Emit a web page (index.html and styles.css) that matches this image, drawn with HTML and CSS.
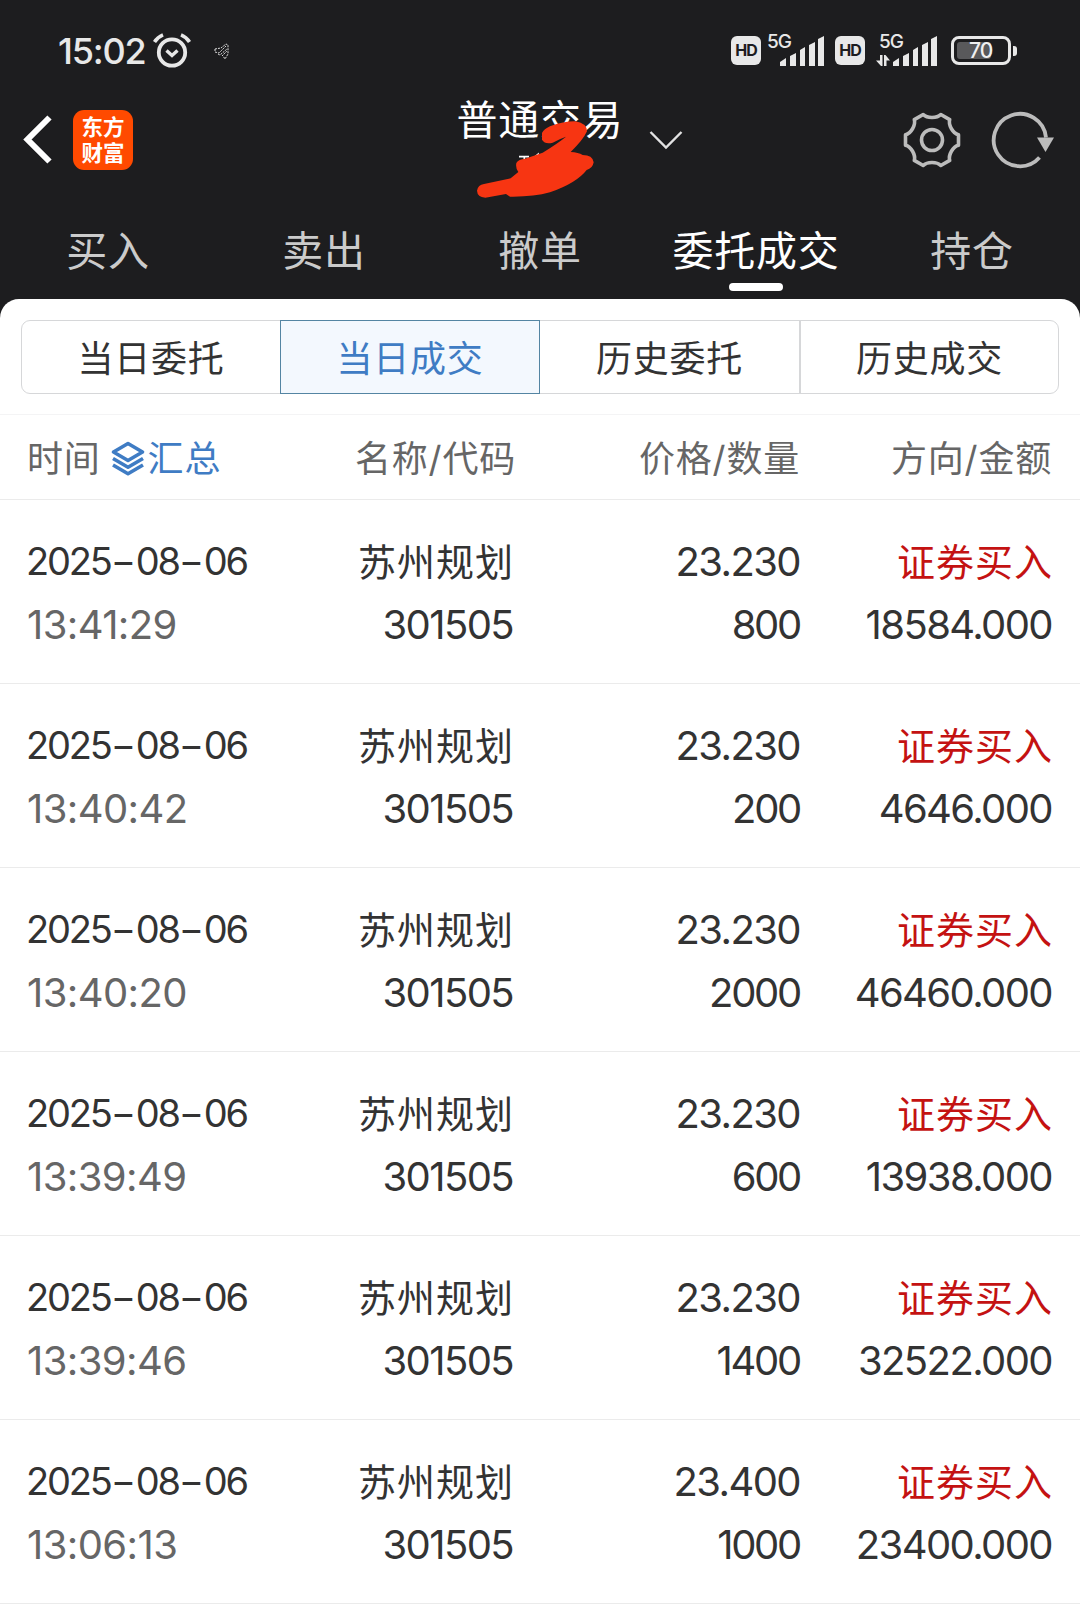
FILE: index.html
```html
<!DOCTYPE html>
<html lang="zh-CN">
<head>
<meta charset="utf-8">
<title>普通交易</title>
<link rel="stylesheet" href="styles.css">
</head>
<body>
<header class="top">
  <div class="status">
    <div class="status-left">
      <span class="clock">15:02</span>
      <svg class="alarm" width="38" height="36" viewBox="0 0 38 36" fill="none" stroke="#e8e8e8"><circle cx="19" cy="19.500" r="13.200" stroke-width="3.800"/><path d="M13.500 17.500l5.500 5 5.500-5" stroke-width="3.400"/><path d="M1.500 9Q4.500 4 10 1.800M36.500 9Q33.500 4 28 1.800" stroke-width="3.600"/></svg>
      <svg class="bell" width="16" height="18" viewBox="0 0 16 18" fill="none" stroke="#ddd" stroke-width="1" stroke-dasharray="2 1"><path d="M1 6l6-1 5-4 2 1v9l-3 5-2-3M1 6v3l4 1 7-7M4 11l2 1 7-6M8 13l5-5"/></svg>
    </div>
    <div class="status-right">
      <span class="hd">HD</span>
      <div class="signal"><span class="net">5G</span><svg width="60" height="34" viewBox="0 0 60 34" fill="#e8e8e8"><path d="M14 33v-4l6-4v8zM24 33v-10l6-3v13zM34 33v-16l5-3v19zM43 33v-21l6-3v24zM52 33v-27l6-3v30z"/></svg></div>
      <span class="hd second">HD</span>
      <div class="signal dual"><span class="net">5G</span><svg width="64" height="34" viewBox="0 0 64 34" fill="#e8e8e8"><path d="M5 22h2.500v11H6L1 27.500h4zM9 33V22h1.500l4.500 5.500h-3.500V33zM18 33v-4l6-4v8zM28 33v-10l6-3v13zM38 33v-16l5-3v19zM47 33v-21l6-3v24zM56 33v-27l6-3v30z"/></svg></div>
      <div class="battery"><span class="level">70</span></div>
      <i class="nub"></i>
    </div>
  </div>
  <div class="bar">
    <div class="bar-left">
      <svg width="30" height="50" viewBox="0 0 30 50" fill="none" stroke="#fff" stroke-width="6"><path d="M26.500 3.500L4.500 25.500 26.500 47.500"/></svg>
      <div class="logo">东方<br>财富</div>
    </div>
    <div class="title">
      <h1>普通交易</h1>
      <svg class="scribble" width="120" height="80" viewBox="168 118 360 240"><path d="M297 231h30M313 231v10M340 236l14-12v16" fill="none" stroke="#fff" stroke-width="5"/><path fill="#f73512" d="M366 160Q372 148 390 140Q430 125 465 125Q500 130 501 155Q490 180 452 217Q475 218 488 226Q518 226 521 248Q518 266 500 271Q470 310 390 338Q340 352 270 351L258 343L196 354Q172 352 171 333Q174 315 192 313L272 296L295 277Q286 265 289 250Q296 238 315 237L368 219Q415 190 438 171Q420 177 398 189Q375 195 366 180Z"/></svg>
      <svg class="chev" width="34" height="20" viewBox="0 0 34 20" fill="none" stroke="#e2e2e2" stroke-width="2.400"><path d="M1.500 2L17 17.500 32.500 2"/></svg>
    </div>
    <div class="bar-right">
      <svg width="60" height="60" viewBox="-30 -30 60 60" fill="none" stroke="#bcbcbc" stroke-width="3.600" stroke-linejoin="round"><circle r="10.500"/><path d="M26.500 5.200C21 6.500 16.100 14.900 17.700 20.400L8.800 25.500C4.900 21.500-4.900 21.500-8.800 25.500L-17.700 20.400C-16.100 14.900-21 6.500-26.500 5.200V-5.200C-21-6.500-16.100-14.900-17.700-20.400L-8.800-25.500C-4.900-21.500 4.900-21.500 8.800-25.500L17.700-20.400C16.100-14.900 21-6.500 26.500-5.200Z"/></svg>
      <svg width="64" height="60" viewBox="-30 -30 64 60"><path d="M19.500 17.500A26.200 26.200 0 1 1 26-2.500" fill="none" stroke="#bcbcbc" stroke-width="3.800"/><path d="M17 -2.500H34L25.500 12Z" fill="#bcbcbc"/></svg>
    </div>
  </div>
  <nav class="tabs">
    <span>买入</span><span>卖出</span><span>撤单</span><span class="on">委托成交</span><span>持仓</span>
  </nav>
</header>
<main class="sheet">
  <div class="segments">
    <span>当日委托</span><span class="on">当日成交</span><span>历史委托</span><span>历史成交</span>
  </div>
  <div class="head grid">
    <div class="when">时间<svg width="34" height="36" viewBox="0 0 34 36" fill="none" stroke="#3f7cc4" stroke-width="3.600" stroke-linejoin="round"><path d="M17 2.500L31.500 11 17 19.500 2.500 11Z"/><path d="M2 17.500L17 26.200 32 17.500M2 24L17 32.700 32 24"/></svg><b>汇总</b></div>
    <div>名称/代码</div><div>价格/数量</div><div>方向/金额</div>
  </div>
  <div class="row grid">
    <div><p class="date">2025<i>-</i>08<i>-</i>06</p><p class="time">13:41:29</p></div>
    <div class="stock"><p class="cn">苏州规划</p><p>301505</p></div>
    <div><p>23.230</p><p class="qty">800</p></div>
    <div><p class="cn buy">证券买入</p><p>18584.000</p></div>
  </div>
  <div class="row grid">
    <div><p class="date">2025<i>-</i>08<i>-</i>06</p><p class="time">13:40:42</p></div>
    <div class="stock"><p class="cn">苏州规划</p><p>301505</p></div>
    <div><p>23.230</p><p class="qty">200</p></div>
    <div><p class="cn buy">证券买入</p><p>4646.000</p></div>
  </div>
  <div class="row grid">
    <div><p class="date">2025<i>-</i>08<i>-</i>06</p><p class="time">13:40:20</p></div>
    <div class="stock"><p class="cn">苏州规划</p><p>301505</p></div>
    <div><p>23.230</p><p class="qty">2000</p></div>
    <div><p class="cn buy">证券买入</p><p>46460.000</p></div>
  </div>
  <div class="row grid">
    <div><p class="date">2025<i>-</i>08<i>-</i>06</p><p class="time">13:39:49</p></div>
    <div class="stock"><p class="cn">苏州规划</p><p>301505</p></div>
    <div><p>23.230</p><p class="qty">600</p></div>
    <div><p class="cn buy">证券买入</p><p>13938.000</p></div>
  </div>
  <div class="row grid">
    <div><p class="date">2025<i>-</i>08<i>-</i>06</p><p class="time">13:39:46</p></div>
    <div class="stock"><p class="cn">苏州规划</p><p>301505</p></div>
    <div><p>23.230</p><p class="qty">1400</p></div>
    <div><p class="cn buy">证券买入</p><p>32522.000</p></div>
  </div>
  <div class="row grid">
    <div><p class="date">2025<i>-</i>08<i>-</i>06</p><p class="time">13:06:13</p></div>
    <div class="stock"><p class="cn">苏州规划</p><p>301505</p></div>
    <div><p>23.400</p><p class="qty">1000</p></div>
    <div><p class="cn buy">证券买入</p><p>23400.000</p></div>
  </div>
</main>
</body>
</html>
```
FILE: styles.css
```css
* { box-sizing: border-box; margin: 0; padding: 0; }
body {
  width: 1080px;
  height: 1608px;
  overflow: hidden;
  background: #1d1d1f;
  color: #333;
  font-family: Inter, "Noto Sans CJK SC", sans-serif;
}
svg { display: block; flex: none; }
.top { height: 299px; }

.status {
  height: 100px;
  padding: 0 63px 0 58px;
  display: flex;
  justify-content: space-between;
  color: #e8e8e8;
}
.status-left { display: flex; padding-top: 33px; }
.clock { width: 95px; font-size: 36px; line-height: 36px; font-weight: 500; letter-spacing: -1.2px; }
.bell { margin: 10px 0 0 23px; }
.status-right { display: flex; padding-top: 33px; }
.hd {
  width: 30px;
  height: 29px;
  margin-top: 3px;
  border-radius: 6px;
  background: #e8e8e8;
  color: #1d1d1f;
  font-size: 16px;
  line-height: 29px;
  font-weight: 700;
  letter-spacing: -1px;
  text-align: center;
}
.signal { position: relative; margin-left: 5px; }
.net { position: absolute; left: 1px; top: 0; font-size: 19px; line-height: 18px; font-weight: 500; letter-spacing: -.9px; }
.second { margin-left: 9px; }
.dual { margin-left: 10px; }
.dual .net { left: 4px; }
.battery {
  width: 60px;
  height: 29px;
  margin: 3px 0 0 12px;
  padding: 3px;
  border: 3px solid #e8e8e8;
  border-radius: 8px;
}
.level {
  display: block;
  width: 34px;
  height: 17px;
  border-radius: 3px;
  background: #59595b;
  color: #f0f0f0;
  font-size: 21px;
  line-height: 18px;
  font-weight: 500;
  letter-spacing: -1px;
  text-indent: 12px;
}
.nub { width: 4px; height: 10px; margin: 13px 0 0 2px; border-radius: 0 3px 3px 0; background: #e8e8e8; }

.bar {
  height: 110px;
  padding: 0 26px 0 23px;
  display: grid;
  grid-template-columns: 1fr 240px 1fr;
}
.bar-left { display: flex; align-items: flex-start; padding-top: 10px; gap: 20px; }
.bar-left svg { margin-top: 4px; }
.logo {
  width: 60px;
  height: 60px;
  padding-top: 4px;
  border-radius: 11px;
  background: #ff4a00;
  color: #fff;
  font-size: 21.500px;
  line-height: 26px;
  font-weight: 700;
  text-align: center;
}
.title { position: relative; left: 1.500px; }
.title h1 { color: #fff; font-size: 41px; line-height: 40px; font-weight: 400; letter-spacing: .8px; text-align: center; }
.scribble { position: absolute; left: 56px; top: 19px; }
.chev { position: absolute; left: 229px; top: 30px; }
.bar-right { display: flex; justify-content: flex-end; gap: 28px; padding-top: 9.500px; }

.tabs { display: grid; grid-template-columns: repeat(5, 1fr); height: 89px; }
.tabs span {
  position: relative;
  color: #cbcbcb;
  font-size: 41px;
  line-height: 82px;
  letter-spacing: .8px;
  text-align: center;
}
.tabs .on { color: #fff; }
.tabs .on::after {
  content: "";
  position: absolute;
  left: 81px;
  top: 73px;
  width: 54px;
  height: 8px;
  border-radius: 4px;
  background: #fff;
}

.sheet { height: 1309px; padding-top: 21px; border-radius: 19px 19px 0 0; background: #fff; }
.segments {
  display: grid;
  grid-template-columns: 258px 260px 259px 1fr;
  grid-template-rows: 72px;
  height: 74px;
  margin: 0 21px 20px;
  border: 1px solid #d6d7d9;
  border-radius: 9px;
}
.segments span { font-size: 36px; line-height: 76px; letter-spacing: .7px; text-align: center; }
.segments span:last-child { border-left: 2px solid #d6d7d9; }
.segments .on { margin: -1px 0; color: #3f7cc4; background: #f3f8fe; border: 1px solid #5485a3; }

.grid { display: grid; grid-template-columns: 250px 239px 284px 252px; padding-left: 27px; text-align: right; }
.grid > :first-child { text-align: left; }
.head {
  height: 86px;
  border-top: 1px solid #f4f4f5;
  border-bottom: 1px solid #ebebeb;
  color: #666;
  font-size: 36px;
  line-height: 88px;
  letter-spacing: .8px;
}
.when { display: flex; align-items: center; }
.when svg { margin-left: 10px; }
.when b { color: #3f7cc4; font-weight: 400; margin-left: 3px; }

.row { height: 184px; padding-top: 30px; border-bottom: 1px solid #ebebeb; font-size: 40px; line-height: 63px; letter-spacing: -1.600px; }
.row p { white-space: nowrap; }
.row .date { margin-left: -1px; font-size: 38px; letter-spacing: -2.200px; }
.date i { display: inline-block; width: 25px; font-style: normal; letter-spacing: 0; text-align: center; transform: scaleX(1.450); }
.row .time { color: #666; letter-spacing: -.6px; }
.stock { padding-right: 3px; }
.row .qty { letter-spacing: -2.300px; }
.row .cn { font-size: 38px; line-height: 64px; margin-bottom: -1px; letter-spacing: 1px; }
.stock .cn { margin-right: -1px; }
.row .buy { margin-right: -1px; color: #c41212; }
```
